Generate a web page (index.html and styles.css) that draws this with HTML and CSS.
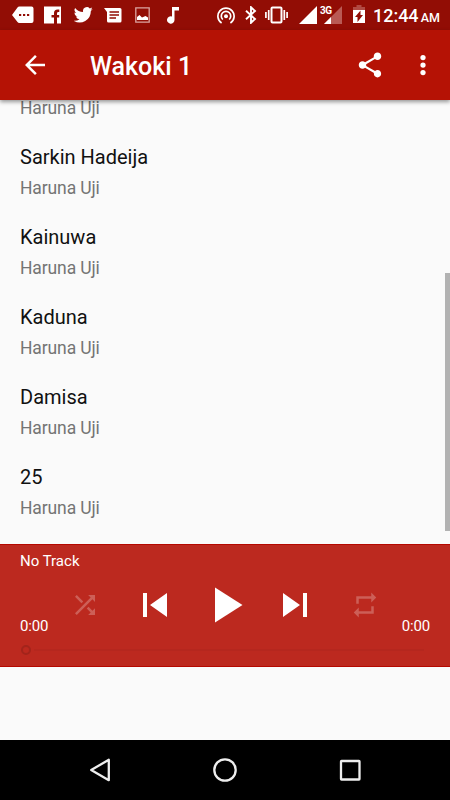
FILE: index.html
```html
<!DOCTYPE html>
<html lang="en">
<head>
<meta charset="utf-8">
<title>Wakoki 1</title>
<link rel="stylesheet" href="styles.css">
</head>
<body>
<div class="screen">
  <div class="status">
    <div class="notices">
      <svg width="22" height="18" viewBox="0 0 22 18"><path fill="#fff" d="M0 9 5.500 1.500Q6 .5 7.500.5H19.500Q21.500.5 21.500 2.500V15Q21.500 17 19.500 17H7.500Q6 17 5.500 16Z"/><path fill="#920d05" d="M7 8h2.200v2H7zm4 0h2.200v2H11zm4 0h2.200v2H15z"/></svg>
      <svg width="17" height="18" viewBox="0 0 17 18"><path fill="#fff" d="M0 .5h17v17h-4v-6h2.200V9H13V7.500q0-1.400 1.400-1.400h.9V3.500h-1.700Q10 3.500 10 7v2H7.500v2.500H10v6H0z"/></svg>
      <svg width="19" height="18" viewBox="0 1.500 24 22"><path fill="#fff" d="M23.600 4.900a10 10 0 0 1-2.800.8 4.900 4.900 0 0 0 2.200-2.700 10 10 0 0 1-3.100 1.200 4.900 4.900 0 0 0-8.400 4.500A14 14 0 0 1 1.400 3.500 4.900 4.900 0 0 0 2.900 10a5 5 0 0 1-2.200-.6 4.900 4.900 0 0 0 3.900 4.900 5 5 0 0 1-2.200.1A4.900 4.900 0 0 0 7 17.800a10 10 0 0 1-7.200 2A14 14 0 0 0 21.200 7.400a10 10 0 0 0 2.400-2.500z"/></svg>
      <svg width="18" height="17" viewBox="0 0 18 17"><path fill="#fff" d="M0 1h16q1.500 0 1.500 1.500v11.500q0 1.500-1.500 1.500H4.500Q3 15.500 3 14V5z"/><path stroke="#920d05" stroke-width="1.300" d="M5.500 5H15M5.500 8H15M5.500 11h6.500"/></svg>
      <svg width="15" height="16" viewBox="0 0 15 16"><path fill="none" stroke="#dba5a2" stroke-width="1.300" d="M.8.8h13.400v14.300H.8z"/><path fill="#fff" d="M2 13V10l2.500-2 2.500 2.500L10.500 9l2.500 1.500V13z"/></svg>
      <svg width="12" height="17" viewBox="0 0 12 17"><path fill="#fff" d="M5 0h7v3.500H7.500V13a3.750 3.700 0 1 1-2.500-3.500z"/></svg>
    </div>
    <div class="system">
      <svg class="cast" width="18" height="17" viewBox="0 0 18 17"><g fill="none" stroke="#fff" stroke-width="1.700"><path d="M4.600 16a8.100 8.100 0 1 1 8.800 0"/><path d="M5.800 12.500a4.700 4.700 0 1 1 6.400 0"/></g><circle cx="9" cy="9.200" r="2" fill="#fff"/></svg>
      <svg class="bt" width="12" height="18" viewBox="0 0 12 18"><path fill="none" stroke="#fff" stroke-width="1.900" d="M1 4.800 10 13l-4 3.800V1.200L10 5l-9 8.200"/></svg>
      <svg class="vibe" width="23" height="18" viewBox="0 0 23 18"><rect x="6.500" y="1.500" width="10" height="15" rx="1" fill="none" stroke="#fff" stroke-width="2"/><path stroke="#fff" stroke-width="1.700" d="M3.700 4v10M.9 6v6M19.300 4v10M22.100 6v6"/></svg>
      <svg class="sig" width="18" height="18" viewBox="0 0 18 18"><path fill="#fff" d="M18 0v18H0z"/></svg>
      <div class="cell"><span class="net">3G</span><svg width="18" height="18" viewBox="0 0 18 18"><path fill="#b95a54" d="M18 0v18H0z"/><path fill="#fff" d="M7 11v7H0z"/></svg></div>
      <svg class="batt" width="12" height="19" viewBox="0 0 12 19"><path fill="#b14a43" d="M3.500 0h5v2H12v3H0V2h3.500z"/><path fill="#fff" d="M0 5h12v13H0z"/><path fill="#920d05" d="M7.500 5.500v4.500H10l-5.500 7v-5H2z"/></svg>
      <span class="time">12:44</span><span class="ampm">AM</span>
    </div>
  </div>
  <header class="bar">
    <svg class="back" viewBox="0 0 24 24"><path d="M20 11H7.830l5.590-5.590L12 4l-8 8 8 8 1.410-1.410L7.830 13H20z"/></svg>
    <h1>Wakoki 1</h1>
    <svg class="share" viewBox="0 0 24 24"><path d="M18 16.080c-.76 0-1.440.3-1.960.77L8.910 12.700c.05-.23.09-.46.09-.7s-.04-.47-.09-.7l7.050-4.110c.54.5 1.250.81 2.040.81 1.660 0 3-1.340 3-3s-1.340-3-3-3-3 1.340-3 3c0 .24.040.47.090.7L8.040 9.810C7.500 9.310 6.790 9 6 9c-1.660 0-3 1.340-3 3s1.340 3 3 3c.79 0 1.500-.31 2.040-.81l7.120 4.160c-.05.21-.08.43-.08.65 0 1.610 1.310 2.920 2.920 2.920s2.920-1.310 2.920-2.920-1.310-2.920-2.920-2.920z"/></svg>
    <svg class="more" viewBox="0 0 24 24"><circle cx="12" cy="6" r="2.100"/><circle cx="12" cy="12" r="2.100"/><circle cx="12" cy="18" r="2.100"/></svg>
  </header>
  <main class="list">
    <ul>
      <li><span class="artist">Haruna Uji</span></li>
      <li><span class="song">Sarkin Hadeija</span><span class="artist">Haruna Uji</span></li>
      <li><span class="song">Kainuwa</span><span class="artist">Haruna Uji</span></li>
      <li><span class="song">Kaduna</span><span class="artist">Haruna Uji</span></li>
      <li><span class="song">Damisa</span><span class="artist">Haruna Uji</span></li>
      <li><span class="song">25</span><span class="artist">Haruna Uji</span></li>
    </ul>
    <div class="scroll"></div>
  </main>
  <section class="player">
    <div class="track">No Track</div>
    <div class="controls">
      <svg class="small" viewBox="0 0 24 24"><path d="M10.590 9.170 5.410 4 4 5.410l5.170 5.170zM14.500 4l2.040 2.040L4 18.590 5.410 20 17.960 7.460 20 9.500V4zm.33 9.410-1.410 1.410 3.130 3.130L14.500 20H20v-5.500l-2.040 2.040z"/></svg>
      <svg class="skip" viewBox="0 0 24 24"><path d="M6 6h2v12H6zm3.500 6 8.500 6V6z"/></svg>
      <svg class="play" viewBox="0 0 24 24"><path d="M8 5v14l11-7z"/></svg>
      <svg class="skip" viewBox="0 0 24 24"><path d="m6 18 8.500-6L6 6zM16 6v12h2V6z"/></svg>
      <svg class="small" viewBox="0 0 24 24"><path d="M7 7h10v3l4-4-4-4v3H5v6h2zm10 10H7v-3l-4 4 4 4v-3h12v-6h-2z"/></svg>
    </div>
    <div class="times"><span>0:00</span><span>0:00</span></div>
    <div class="seek"><i class="thumb"></i><i class="rail"></i></div>
  </section>
  <div class="blank"></div>
  <nav class="nav">
    <svg viewBox="0 0 30 30"><path d="M6.200 15 23.800 4.800v20.400z"/></svg>
    <svg viewBox="0 0 30 30"><circle cx="15" cy="15" r="10.700"/></svg>
    <svg viewBox="0 0 30 30"><rect x="6" y="6" width="18.500" height="18.500" rx=".5"/></svg>
  </nav>
</div>
</body>
</html>
```
FILE: styles.css
```css
* { box-sizing: border-box; }
body { margin: 0; font-family: Roboto, "Liberation Sans", sans-serif; }
svg { display: block; flex: none; }
.screen { width: 450px; height: 800px; display: flex; flex-direction: column; overflow: hidden; background: #fafafa; }

.status { height: 30px; flex: none; background: #920d05; display: flex; justify-content: space-between; padding: 0 10px 0 12px; color: #fff; }
.notices { display: flex; align-items: center; }
.notices svg + svg { margin-left: 10px; }
.notices svg:nth-child(3) { margin-left: 13px; }
.notices svg:nth-child(4) { margin-left: 11px; }
.notices svg:nth-child(5) { margin-left: 13px; }
.notices svg:nth-child(6) { margin-left: 17px; }
.system { display: flex; align-items: center; width: 223px; }
.system .cast { margin-right: 10px; }
.bt { margin-right: 8px; }
.vibe { margin-right: 11px; }
.sig { margin-right: 3px; }
.cell { position: relative; width: 22px; display: flex; justify-content: flex-end; margin-right: 11px; }
.net { position: absolute; left: 0; top: 0; font-size: 10px; line-height: 10px; font-weight: 700; letter-spacing: -.6px; }
.batt { margin-top: -1px; }
.time { margin-left: 8px; font-size: 18px; line-height: 30px; font-weight: 500; width: 48px; padding-top: 2px; }
.ampm { font-size: 12.500px; line-height: 30px; font-weight: 500; padding-top: 5px; }

.bar { position: relative; height: 70px; flex: none; display: flex; align-items: center; background: #b51205; box-shadow: 0 2px 4px rgba(0,0,0,.4); padding-left: 20px; }
.bar svg { width: 30px; height: 30px; fill: #fff; }
.bar h1 { margin: 4px 0 0 40px; width: 265px; font-size: 25px; line-height: 30px; font-weight: 500; color: #fff; }
.bar .more { margin-left: 22.500px; }

.list { height: 444px; flex: none; display: flex; justify-content: space-between; overflow: hidden; }
.list ul { list-style: none; margin: -49px 0 0; padding: 0 0 0 20px; }
.list li { height: 80px; padding-top: 14px; display: flex; flex-direction: column; justify-content: flex-start; }
.list li:first-child { padding-top: 46px; }
.song { font-size: 20px; line-height: 24px; color: #111; margin-bottom: 8px; }
.artist { font-size: 17.500px; letter-spacing: -.12px; line-height: 22px; color: #747474; }
.scroll { width: 5px; height: 258px; margin-top: 173px; background: #b2b2b2; }

.player { height: 123px; flex: none; background: #bc291f; border-top: 1px solid #b50800; border-bottom: 1px solid #b50800; color: #fff; }
.track { height: 30px; padding: 6px 0 0 20px; font-size: 15px; line-height: 20px; }
.controls { height: 60px; display: grid; grid-template-columns: repeat(5, 70px); justify-content: center; place-items: center; }
.controls svg { fill: #fff; }
.small { width: 30px; height: 30px; opacity: .25; }
.skip { width: 48px; height: 48px; }
.play { width: 60px; height: 60px; }
.times { display: flex; justify-content: space-between; padding: 0 20px; margin-top: -20px; font-size: 15px; letter-spacing: -.15px; line-height: 22px; }
.seek { display: flex; align-items: center; gap: 3px; padding: 8px 26px 0 21px; }
.thumb { width: 10px; height: 10px; border: 2px solid #a3241b; border-radius: 50%; }
.rail { flex: 1; height: 2px; background: #b5271e; }
.blank { flex: 1; }

.nav { height: 60px; flex: none; background: #000; display: flex; justify-content: center; align-items: center; gap: 95px; }
.nav svg { width: 30px; height: 30px; fill: none; stroke: #eee; stroke-width: 2.300; stroke-linejoin: round; }
```
